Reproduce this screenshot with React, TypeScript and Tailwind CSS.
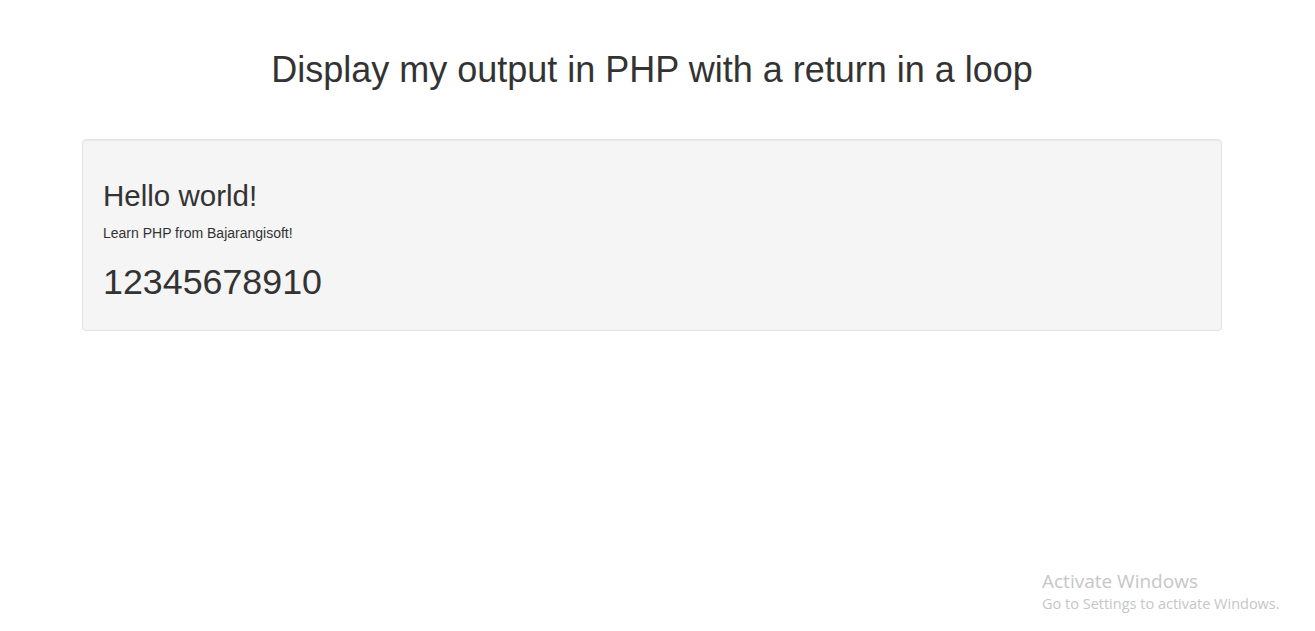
export default function App() {
  return (
    <div className="relative h-[631px] overflow-hidden bg-white pt-[50px] font-['Liberation_Sans',Arial,sans-serif] text-[#333]">
      <h1 className="mb-[49px] ml-[82px] w-[1140px] text-center text-[36px] leading-[39.6px]">
        Display my output in PHP with a return in a loop
      </h1>
      <div className="ml-[82px] w-[1140px] rounded border border-[#e3e3e3] bg-[#f5f5f5] px-[20px] pt-[39px] pb-[28px] shadow-[inset_0_1px_1px_rgba(0,0,0,0.05)]">
        <h3 className="text-[29.5px] leading-[33px]">Hello world!</h3>
        <p className="mt-[11px] text-[14px] leading-[20px]">Learn PHP from Bajarangisoft!</p>
        <div className="mt-[20px] text-[35.8px] leading-[39.6px]">12345678910</div>
      </div>
      <div className="absolute left-[1042px] top-[568px] font-['Open_Sans','Noto_Sans',sans-serif] text-[#c6c6c6]">
        <div className="text-[19px] leading-[26px]">Activate Windows</div>
        <div className="text-[14.5px] leading-[20px]">Go to Settings to activate Windows.</div>
      </div>
    </div>
  );
}
